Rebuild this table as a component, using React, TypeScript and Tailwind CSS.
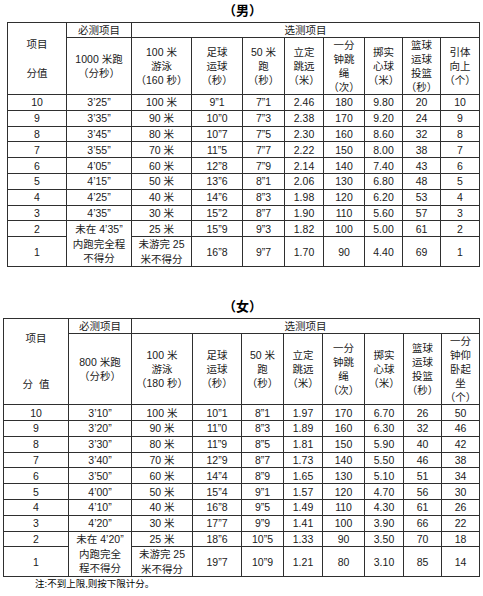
import React from 'react';

type Row = {
  score: string;
  run?: string;
  swim: React.ReactNode;
  cells: string[];
};

interface ScoreTableProps {
  title: string;
  widths: string[];
  tableWidth: string;
  offset: string;
  headHeight: string;
  subHeight: string;
  pointLabel: React.ReactNode;
  heads: React.ReactNode[];
  rows: Row[];
  failRun: React.ReactNode;
}

const cell = 'border border-[#2f2f2f] p-0 text-center align-middle font-normal';

const ScoreTable: React.FC<ScoreTableProps> = ({
  title,
  widths,
  tableWidth,
  offset,
  headHeight,
  subHeight,
  pointLabel,
  heads,
  rows,
  failRun,
}) => (
  <div>
    <div className="flex h-[22px] items-center justify-center pb-[1px] pl-[2px] text-[13px] font-bold leading-none">
      {title}
    </div>
    <table className={`${tableWidth} ${offset} table-fixed border-collapse text-[10.5px] leading-[14px] text-[#1a1a1a]`}>
      <colgroup>
        {widths.map((w, i) => (
          <col key={i} className={w} />
        ))}
      </colgroup>
      <thead>
        <tr className={headHeight}>
          <th rowSpan={2} className={cell}>
            {pointLabel}
          </th>
          <th className={cell}>必测项目</th>
          <th colSpan={8} className={cell}>
            选测项目
          </th>
        </tr>
        <tr className={subHeight}>
          {heads.map((h, i) => (
            <th key={i} className={cell}>
              {h}
            </th>
          ))}
        </tr>
      </thead>
      <tbody>
        {rows.map((r) => {
          const last = r.score === '1';
          return (
            <tr key={r.score} className={last ? 'h-[28px]' : 'h-[15.8px]'}>
              <td className={cell}>{r.score}</td>
              {r.score === '2' && (
                <td rowSpan={2} className={`${cell} leading-[14.5px]`}>
                  {failRun}
                </td>
              )}
              {r.run && <td className={cell}>{r.run}</td>}
              <td className={`${cell} ${last ? 'leading-[14.5px]' : ''}`}>{r.swim}</td>
              {r.cells.map((c, i) => (
                <td key={i} className={cell}>
                  {c}
                </td>
              ))}
            </tr>
          );
        })}
      </tbody>
    </table>
  </div>
);

const lines = (...parts: string[]) =>
  parts.map((p, i) => (
    <React.Fragment key={i}>
      {i > 0 && <br />}
      {p}
    </React.Fragment>
  ));

const swimFail = lines('未游完 25', '米不得分');

const maleRows: Row[] = [
  { score: '10', run: '3’25”', swim: '100 米', cells: ['9”1', '7”1', '2.46', '180', '9.80', '20', '10'] },
  { score: '9', run: '3’35”', swim: '90 米', cells: ['10”0', '7”3', '2.38', '170', '9.20', '24', '9'] },
  { score: '8', run: '3’45”', swim: '80 米', cells: ['10”7', '7”5', '2.30', '160', '8.60', '32', '8'] },
  { score: '7', run: '3’55”', swim: '70 米', cells: ['11”5', '7”7', '2.22', '150', '8.00', '38', '7'] },
  { score: '6', run: '4’05”', swim: '60 米', cells: ['12”8', '7”9', '2.14', '140', '7.40', '43', '6'] },
  { score: '5', run: '4’15”', swim: '50 米', cells: ['13”6', '8”1', '2.06', '130', '6.80', '48', '5'] },
  { score: '4', run: '4’25”', swim: '40 米', cells: ['14”6', '8”3', '1.98', '120', '6.20', '53', '4'] },
  { score: '3', run: '4’35”', swim: '30 米', cells: ['15”2', '8”7', '1.90', '110', '5.60', '57', '3'] },
  { score: '2', swim: '25 米', cells: ['15”9', '9”3', '1.82', '100', '5.00', '61', '2'] },
  { score: '1', swim: swimFail, cells: ['16”8', '9”7', '1.70', '90', '4.40', '69', '1'] },
];

const femaleRows: Row[] = [
  { score: '10', run: '3’10”', swim: '100 米', cells: ['10”1', '8”1', '1.97', '170', '6.70', '26', '50'] },
  { score: '9', run: '3’20”', swim: '90 米', cells: ['11”0', '8”3', '1.89', '160', '6.30', '32', '46'] },
  { score: '8', run: '3’30”', swim: '80 米', cells: ['11”9', '8”5', '1.81', '150', '5.90', '40', '42'] },
  { score: '7', run: '3’40”', swim: '70 米', cells: ['12”9', '8”7', '1.73', '140', '5.50', '46', '38'] },
  { score: '6', run: '3’50”', swim: '60 米', cells: ['14”4', '8”9', '1.65', '130', '5.10', '51', '34'] },
  { score: '5', run: '4’00”', swim: '50 米', cells: ['15”4', '9”1', '1.57', '120', '4.70', '56', '30'] },
  { score: '4', run: '4’10”', swim: '40 米', cells: ['16”8', '9”5', '1.49', '110', '4.30', '61', '26'] },
  { score: '3', run: '4’20”', swim: '30 米', cells: ['17”7', '9”9', '1.41', '100', '3.90', '66', '22'] },
  { score: '2', swim: '25 米', cells: ['18”6', '10”5', '1.33', '90', '3.50', '70', '18'] },
  { score: '1', swim: swimFail, cells: ['19”7', '10”9', '1.21', '80', '3.10', '85', '14'] },
];

const commonHeads = [
  lines('足球', '运球', '（秒）'),
  lines('50 米', '跑', '（秒）'),
  lines('立定', '跳远', '（米）'),
  lines('一分', '钟跳', '绳', '（次）'),
  lines('掷实', '心球', '（米）'),
  lines('篮球', '运球', '投篮', '（秒）'),
];

const maleHeads = [
  lines('1000 米跑', '（分秒）'),
  lines('100 米', '游泳', '（160 秒）'),
  ...commonHeads,
  lines('引体', '向上', '（个）'),
];

const femaleHeads = [
  lines('800 米跑', '（分秒）'),
  lines('100 米', '游泳', '（180 秒）'),
  ...commonHeads,
  lines('一分', '钟仰', '卧起', '坐', '（个）'),
];

export default function App() {
  return (
    <div
      className="h-[596px] w-[483px] overflow-hidden bg-white text-black"
      style={{ fontFamily: '"Liberation Sans", Arial, "Noto Sans CJK SC", sans-serif' }}
    >
      <ScoreTable
        title="（男）"
        widths={['w-[59px]', 'w-[65px]', 'w-[60px]', 'w-[51px]', 'w-[42px]', 'w-[39px]', 'w-[41px]', 'w-[38px]', 'w-[38px]', 'w-[39px]']}
        tableWidth="w-[472px]"
        offset="ml-[7px]"
        headHeight="h-[13px]"
        subHeight="h-[55px]"
        pointLabel={<span className="leading-[14.5px]">项目<br /><br />分值</span>}
        heads={maleHeads}
        rows={maleRows}
        failRun={lines('未在 4’35”', '内跑完全程', '不得分')}
      />
      <div className="mt-[29px]">
        <ScoreTable
          title="（女）"
          widths={['w-[65px]', 'w-[63px]', 'w-[61px]', 'w-[49px]', 'w-[42px]', 'w-[39px]', 'w-[42px]', 'w-[39px]', 'w-[38px]', 'w-[38px]']}
          tableWidth="w-[476px]"
          offset="ml-[3px]"
          headHeight="h-[14px]"
          subHeight="h-[69px]"
          pointLabel={<span className="leading-[15.3px]">项目<br /><br /><br />分&nbsp;&nbsp;值</span>}
          heads={femaleHeads}
          rows={femaleRows}
          failRun={lines('未在 4’20”', '内跑完全', '程不得分')}
        />
      </div>
      <p className="ml-[35px] mt-[1px] text-[9.5px] leading-[12px]">注:不到上限,则按下限计分。</p>
    </div>
  );
}
